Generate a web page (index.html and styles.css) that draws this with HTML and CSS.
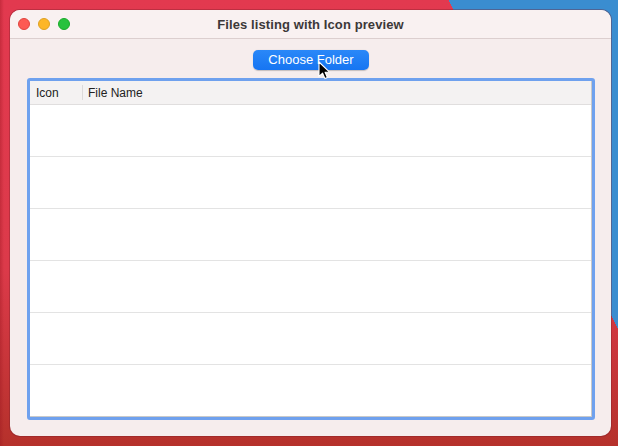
FILE: index.html
```html
<!DOCTYPE html>
<html>
<head>
<meta charset="utf-8">
<link rel="stylesheet" href="styles.css">
</head>
<body>
<div class="window">
  <div class="titlebar">
    <div class="lights">
      <span class="light red"></span>
      <span class="light yellow"></span>
      <span class="light green"></span>
    </div>
    <div class="title">Files listing with Icon preview</div>
  </div>
  <div class="content">
    <div class="btn-row">
      <button class="btn">Choose Folder</button>
      <svg class="cursor" width="13" height="19" viewBox="0 0 13 19">
        <path d="M1 1 L1 15.5 L4.6 12.2 L7 17.6 L9.4 16.6 L7.1 11.3 L11.8 11.3 Z" fill="#000" stroke="#fff" stroke-width="1.1" stroke-linejoin="round"/>
      </svg>
    </div>
    <div class="table-ring">
      <div class="table">
        <div class="thead">
          <div class="th th-icon">Icon</div>
          <div class="th th-name">File Name</div>
        </div>
        <div class="row"></div>
        <div class="row"></div>
        <div class="row"></div>
        <div class="row"></div>
        <div class="row"></div>
        <div class="row last"></div>
      </div>
    </div>
  </div>
</div>
</body>
</html>
```

FILE: styles.css
```css
html, body {
  margin: 0;
  padding: 0;
}
body {
  width: 618px;
  height: 446px;
  overflow: hidden;
  box-sizing: border-box;
  padding: 10px 7px 10px 10px;
  font-family: "Liberation Sans", "DejaVu Sans", Arial, sans-serif;
  background:
    linear-gradient(62.7deg, transparent 80%, #3a8dd0 80%),
    linear-gradient(90deg, rgba(150, 20, 30, 0.35) 0, transparent 4px),
    linear-gradient(180deg, #e2394f 0%, #dc3a4a 60%, #b5312b 100%);
}
.window {
  width: 601px;
  height: 426px;
  border-radius: 10px;
  background: #f6eded;
  box-shadow: 0 0 0 1px rgba(120, 30, 40, 0.35);
  display: flex;
  flex-direction: column;
  overflow: hidden;
}
.titlebar {
  height: 28px;
  flex: none;
  background: #f9f1f1;
  border-bottom: 1px solid #dccfcf;
  position: relative;
  display: flex;
  align-items: center;
  justify-content: center;
}
.lights {
  position: absolute;
  left: 8px;
  top: 8px;
  display: flex;
  gap: 8px;
}
.light {
  width: 12px;
  height: 12px;
  border-radius: 50%;
  display: block;
  box-sizing: border-box;
}
.red { background: #fd5a53; border: 0.5px solid #e0443e; }
.yellow { background: #fdb627; border: 0.5px solid #dea123; }
.green { background: #28c23e; border: 0.5px solid #1aab29; }
.title {
  font-size: 13px;
  font-weight: bold;
  color: #3c3838;
  letter-spacing: 0.1px;
}
.content {
  flex: 1;
  padding: 11px 16px 16px 17px;
  display: flex;
  flex-direction: column;
  gap: 8px;
}
.btn-row {
  display: flex;
  justify-content: center;
  position: relative;
}
.btn {
  width: 116px;
  height: 20px;
  border: none;
  border-radius: 5px;
  background: linear-gradient(180deg, #2a88f8 0%, #1675f2 100%);
  color: #fff;
  font-family: "Liberation Sans", "DejaVu Sans", Arial, sans-serif;
  font-size: 13px;
  padding: 0;
  line-height: 20px;
  box-shadow: 0 0.5px 1px rgba(0, 0, 0, 0.2);
}
.cursor {
  position: absolute;
  left: 291px;
  top: 11px;
}
.table-ring {
  height: 342px;
  box-sizing: border-box;
  border: 3px solid #6fa1ee;
  border-radius: 3px;
  background: #fff;
}
.table {
  height: 100%;
  box-sizing: border-box;
  border-right: 1px solid #c9c9c9;
  border-bottom: 1px solid #c9c9c9;
  background: #fff;
}
.thead {
  height: 23px;
  background: #f4f2f2;
  border-bottom: 1px solid #e0dede;
  display: flex;
  align-items: center;
  font-size: 12px;
  color: #222;
}
.th {
  height: 15px;
  line-height: 16px;
}
.th-icon {
  width: 46px;
  padding-left: 6px;
  border-right: 1px solid #dcdada;
}
.th-name {
  padding-left: 5px;
}
.row {
  height: 51px;
  border-bottom: 1px solid #e3e3e3;
}
.row.last {
  border-bottom: none;
}
```
